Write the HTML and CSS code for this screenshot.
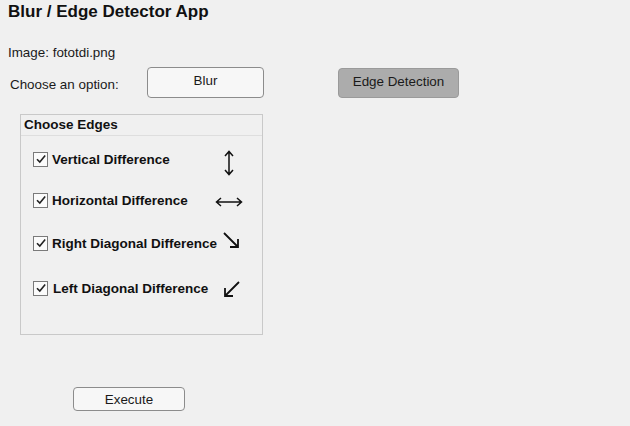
FILE: index.html
```html
<!DOCTYPE html>
<html>
<head>
<meta charset="utf-8">
<link rel="stylesheet" href="styles.css">
</head>
<body>
<div class="app">
  <h1 class="title">Blur / Edge Detector App</h1>
  <div class="image-line">Image: fototdi.png</div>
  <div class="option-row">
    <span class="option-label">Choose an option:</span>
    <button class="btn btn-blur">Blur</button>
    <button class="btn btn-edge">Edge Detection</button>
  </div>
  <div class="panel">
    <div class="panel-head">Choose Edges</div>
    <div class="panel-body">
      <div class="edge-row row-v">
        <span class="cb"><svg width="12" height="12" viewBox="0 0 12 12"><path d="M2 6.2 L4.8 9 L10.2 2.6" fill="none" stroke="#222" stroke-width="1.6"/></svg></span>
        <span class="edge-label">Vertical Difference</span>
        <svg class="arrow arrow-v" width="14" height="26" viewBox="0 0 14 26"><path d="M7 2 V24 M3 6 L7 1.5 L11 6 M3 20 L7 24.5 L11 20" fill="none" stroke="#111" stroke-width="1.5"/></svg>
      </div>
      <div class="edge-row row-h">
        <span class="cb"><svg width="12" height="12" viewBox="0 0 12 12"><path d="M2 6.2 L4.8 9 L10.2 2.6" fill="none" stroke="#222" stroke-width="1.6"/></svg></span>
        <span class="edge-label">Horizontal Difference</span>
        <svg class="arrow arrow-h" width="28" height="12" viewBox="0 0 28 12"><path d="M1.5 6 H26.5 M6 2 L1.5 6 L6 10 M22 2 L26.5 6 L22 10" fill="none" stroke="#111" stroke-width="1.5"/></svg>
      </div>
      <div class="edge-row row-r">
        <span class="cb"><svg width="12" height="12" viewBox="0 0 12 12"><path d="M2 6.2 L4.8 9 L10.2 2.6" fill="none" stroke="#222" stroke-width="1.6"/></svg></span>
        <span class="edge-label">Right Diagonal Difference</span>
        <svg class="arrow arrow-r" width="18" height="18" viewBox="0 0 18 18"><path d="M2 2 L16 16 M16 8 V16 H8" fill="none" stroke="#111" stroke-width="1.8"/></svg>
      </div>
      <div class="edge-row row-l">
        <span class="cb"><svg width="12" height="12" viewBox="0 0 12 12"><path d="M2 6.2 L4.8 9 L10.2 2.6" fill="none" stroke="#222" stroke-width="1.6"/></svg></span>
        <span class="edge-label">Left Diagonal Difference</span>
        <svg class="arrow arrow-l" width="18" height="18" viewBox="0 0 18 18"><path d="M16 2 L2 16 M2 8 V16 H10" fill="none" stroke="#111" stroke-width="1.8"/></svg>
      </div>
    </div>
  </div>
  <div class="exec-row">
    <button class="btn btn-exec">Execute</button>
  </div>
</div>
</body>
</html>
```
FILE: styles.css
```css
html, body {
  margin: 0;
  padding: 0;
  background: #f0f0f0;
}
body {
  width: 630px;
  height: 426px;
  overflow: hidden;
  font-family: "Liberation Sans", Arial, sans-serif;
  color: #1a1a1a;
}
.app {
  padding: 2px 0 0 8px;
}
.title {
  margin: 0;
  font-size: 17px;
  font-weight: bold;
  line-height: 20px;
  color: #111;
}
.image-line {
  margin-top: 23px;
  font-size: 13.4px;
  line-height: 16px;
}
.option-row {
  display: flex;
  align-items: center;
  margin-top: 6px;
  height: 31px;
}
.option-label {
  font-size: 13.4px;
  margin-left: 2px;
  width: 137px;
  padding-top: 3px;
}
.btn {
  font-family: "Liberation Sans", Arial, sans-serif;
  font-size: 13.4px;
  color: #1a1a1a;
  border: 1px solid #8c8c8c;
  border-radius: 4px;
  padding: 0;
  margin: 0;
}
.btn-blur {
  width: 117px;
  height: 31px;
  background: #f7f7f7;
  padding-bottom: 4px;
}
.btn-edge {
  width: 121px;
  height: 30px;
  margin-left: 74px;
  margin-top: 1px;
  background: #acacac;
  border-color: #9a9a9a;
  padding-bottom: 4px;
}
.panel {
  margin-top: 16px;
  margin-left: 12px;
  width: 241px;
  height: 219px;
  border: 1px solid #c9c9c9;
  box-sizing: content-box;
}
.panel-head {
  height: 20px;
  line-height: 20px;
  border-bottom: 1px solid #dedede;
  font-size: 13.5px;
  font-weight: bold;
  padding-left: 3px;
  color: #111;
}
.panel-body {
  display: flex;
  flex-direction: column;
  padding-left: 12px;
}
.edge-row {
  display: flex;
  align-items: center;
  height: 20px;
  position: relative;
}
.row-v { margin-top: 13px; }
.row-h { margin-top: 21px; }
.row-r { margin-top: 23px; }
.row-l { margin-top: 25px; }
.cb {
  width: 13px;
  height: 13px;
  border: 1px solid #7a7a7a;
  background: #fbfbfb;
  display: flex;
  align-items: center;
  justify-content: center;
  box-sizing: content-box;
}
.edge-label {
  margin-left: 4px;
  font-size: 13.5px;
  font-weight: bold;
  color: #111;
}
.row-l .edge-label { margin-left: 5px; }
.arrow {
  position: absolute;
}
.arrow-v { left: 189px; top: 1px; }
.arrow-h { left: 182px; top: 6px; }
.arrow-r { left: 189px; top: -2px; }
.arrow-l { left: 190px; top: 2px; }
.exec-row {
  margin-top: 52px;
  padding-left: 65px;
}
.btn-exec {
  width: 112px;
  height: 24px;
  background: #f7f7f7;
}
```
